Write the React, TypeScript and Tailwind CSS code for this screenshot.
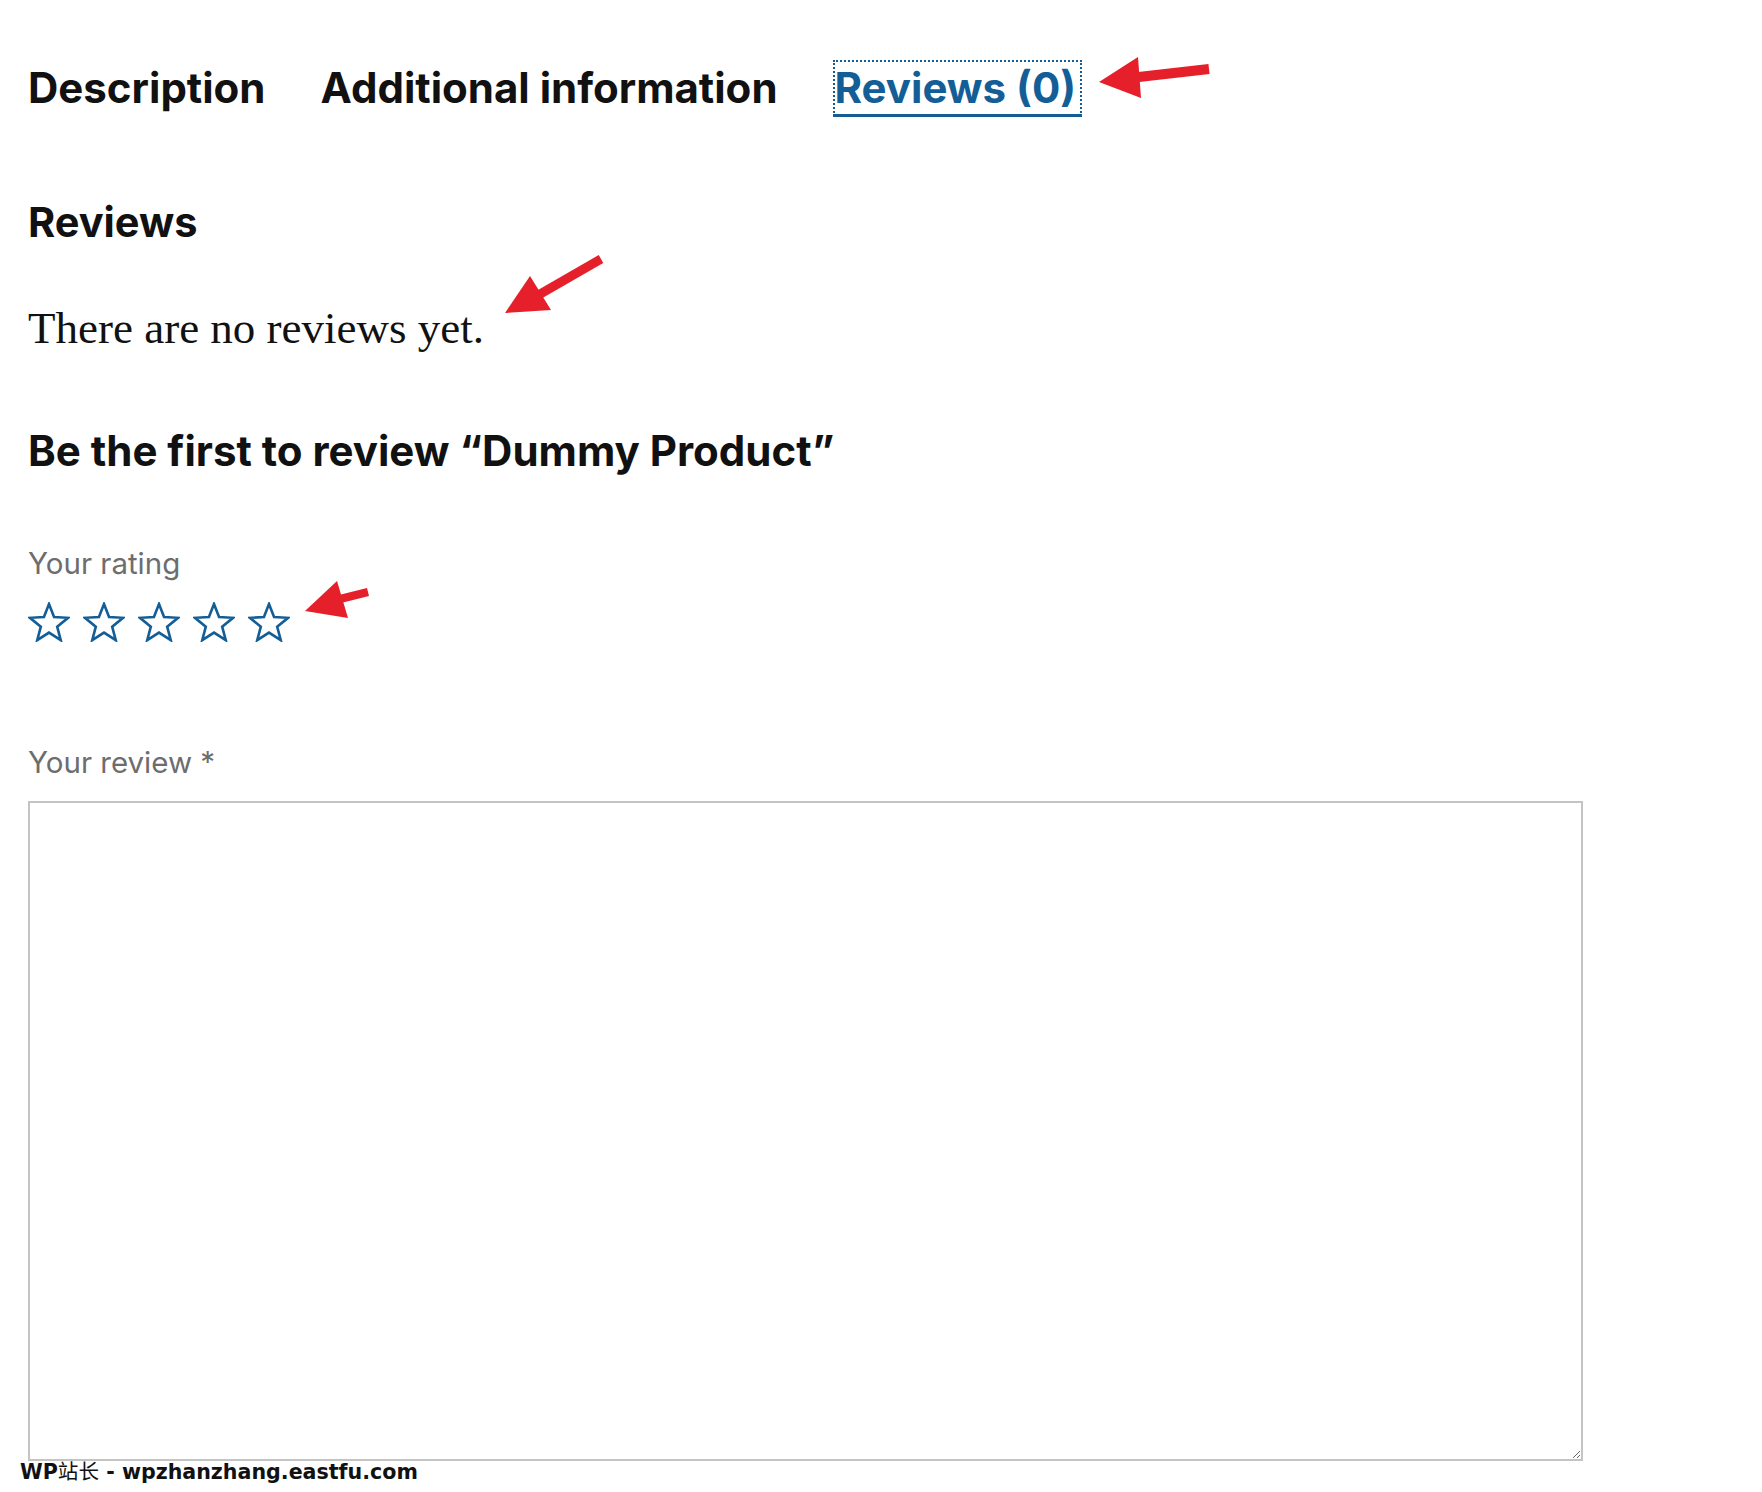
import React from "react";

const BLUE = "#135e96";

// outline star points, computed once
const starPoints = (() => {
  const cx = 21;
  const cy = 22;
  const R = 20;
  const r = 8.6;
  const pts: string[] = [];
  for (let i = 0; i < 10; i++) {
    const rad = i % 2 === 0 ? R : r;
    const a = ((-90 + i * 36) * Math.PI) / 180;
    pts.push(`${(cx + rad * Math.cos(a)).toFixed(2)},${(cy + rad * Math.sin(a)).toFixed(2)}`);
  }
  return pts.join(" ");
})();

function Star() {
  return (
    <svg width="42" height="40" viewBox="0 0 42 40" className="block">
      <polygon points={starPoints} fill="none" stroke={BLUE} strokeWidth="2.6" strokeLinejoin="miter" />
    </svg>
  );
}

function Arrows() {
  return (
    <svg className="pointer-events-none absolute left-0 top-0" width="1762" height="1492" viewBox="0 0 1762 1492">
      {/* tab arrow */}
      <line x1="1130" y1="78" x2="1209" y2="69" stroke="#e5202a" strokeWidth="10" />
      <polygon points="1099,82 1138,57 1141,98" fill="#e5202a" />
      {/* no reviews arrow */}
      <line x1="535" y1="297" x2="601" y2="259" stroke="#e5202a" strokeWidth="9" />
      <polygon points="505,313 530,276 551,310" fill="#e5202a" />
      {/* stars arrow */}
      <line x1="332" y1="601" x2="368" y2="592" stroke="#e5202a" strokeWidth="8" />
      <polygon points="305,611 337,581 348,618" fill="#e5202a" />
    </svg>
  );
}

export default function App() {
  return (
    <div className="relative h-[1492px] w-[1762px] overflow-hidden bg-white px-[28px] font-[family-name:Inter,sans-serif] text-[#111]">
      {/* Tabs */}
      <ul className="flex items-start gap-[55px] pt-[60px]">
        <li>
          <a className="inline-block border-b-[3px] border-transparent pb-[5px] pt-[7px] text-[42px] font-bold leading-[42px]">
            Description
          </a>
        </li>
        <li>
          <a className="inline-block border-b-[3px] border-transparent pb-[5px] pt-[7px] text-[42px] font-bold leading-[42px]">
            Additional information
          </a>
        </li>
        <li>
          <a className="inline-block border-b-[3px] border-[#135e96] pb-[5px] pl-[2px] pr-[6px] pt-[7px] text-[42px] font-bold leading-[42px] text-[#135e96] outline-2 outline-dotted outline-[#135e96] outline-offset-[-2px]">
            Reviews (0)
          </a>
        </li>
      </ul>

      <h2 className="mt-[85px] text-[41.5px] font-bold leading-[41.5px]">Reviews</h2>

      <p className="mt-[62px] font-[family-name:'Liberation_Serif',serif] text-[45px] leading-[45px] text-[#111]">
        There are no reviews yet.
      </p>

      <h3 className="mt-[79px] text-[42px] font-bold leading-[42px]">
        Be the first to review “Dummy Product”
      </h3>

      <div className="mt-[77px] text-[29.5px] leading-[29.5px] text-[#6d6d6d]">Your rating</div>

      <div className="mt-[24px] flex gap-[13px]">
        <Star />
        <Star />
        <Star />
        <Star />
        <Star />
      </div>

      <div className="mt-[106px] text-[29.5px] leading-[29.5px] text-[#6d6d6d]">Your review *</div>

      <textarea className="mt-[23px] block h-[660px] w-[1555px] border-2 border-[#c4c4c4] bg-white" />

      <Arrows />

      <div className="absolute left-[20px] top-[1458px] font-[family-name:'DejaVu_Sans',sans-serif] text-[20.6px] font-bold leading-[24px] text-[#111]">
        WP<span className="font-[family-name:'Noto_Sans_CJK_SC',sans-serif] font-normal">站长</span> - wpzhanzhang.eastfu.com
      </div>
    </div>
  );
}
